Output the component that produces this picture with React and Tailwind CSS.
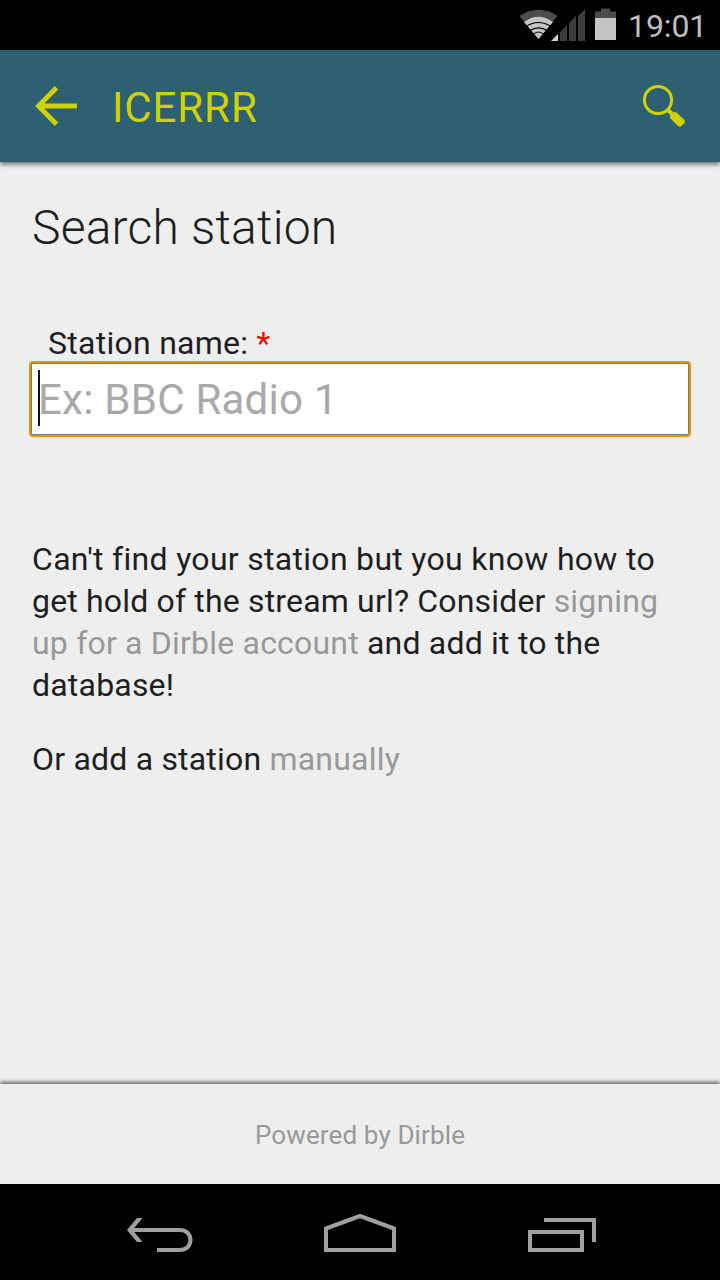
function StatusBar() {
  return (
    <div className="flex h-[50px] shrink-0 items-center justify-end bg-black pr-[14px]">
      <svg className="h-[50px] w-[120px] shrink-0" viewBox="0 0 120 50">
        <path d="M19.500 16 Q38.500 3.500 57.500 16 L38.500 39 Z" fill="#4c4c4c" />
        <path d="M24 22 Q38.500 11.500 53 22 L38.500 39 Z" fill="#c4c4c4" />
        <path d="M26 26.500 Q38.500 18.500 51 26.500" fill="none" stroke="#000" strokeWidth="1.200" />
        <path d="M29.500 30.800 Q38.500 25 47.500 30.800" fill="none" stroke="#000" strokeWidth="1.200" />
        <path d="M33 34.500 Q38.500 29.500 44 34.500" fill="none" stroke="#000" strokeWidth="1.100" />
        <path d="M51 41 L58 34 V41 Z" fill="#d0d0d0" />
        <path d="M60 32 L67 25 V41 H60 Z M69 23 L76 16 V41 H69 Z M78 16 L85 9 V41 H78 Z" fill="#3c3c3c" />
        <path d="M95 18 V11.500 H101 V8.500 H110 V11.500 H116 V18 Z" fill="#4c4c4c" />
        <path d="M95 18 H116 V40 H95 Z" fill="#c4c4c4" />
      </svg>
      <span className="ml-[8px] mt-[2px] w-[78px] whitespace-nowrap text-[32px] leading-[38px] tracking-[-0.1px] text-[#bebebe]">19:01</span>
    </div>
  );
}

function Header() {
  return (
    <header className="relative z-10 flex h-[112px] shrink-0 items-center bg-[#2d6073] pl-[34px] pr-[34px] text-[#cfd100] shadow-[0_2px_5px_rgba(0,0,0,0.6)]">
      <svg className="h-[42px] w-[44px]" viewBox="0 0 44 42" fill="none" stroke="currentColor" strokeWidth="4.800">
        <path d="M43 21 H5 M22.500 2.800 L4.500 21 L22.500 39.200" />
      </svg>
      <h1 className="ml-[34px] mt-[4px] whitespace-nowrap text-[42px] leading-[50px] tracking-[0.9px]">ICERRR</h1>
      <svg className="ml-auto h-[44px] w-[44px]" viewBox="0 0 44 44" fill="none" stroke="currentColor">
        <circle cx="16" cy="16" r="13.600" strokeWidth="3" />
        <path d="M25.500 25.500 L31 31" strokeWidth="4" />
        <path d="M28 32 L32 28 L34.500 28.500 L42.500 36 Q43.500 38 42 39.500 L39.500 42 Q37.500 43.500 35.500 41.500 L28 34 Z" fill="currentColor" stroke="none" />
      </svg>
    </header>
  );
}

function StationField() {
  return (
    <div className="mt-[65px]">
      <label htmlFor="station" className="block whitespace-nowrap pl-[16px] text-[32px] leading-[42px] tracking-[0.27px]">
        Station name: <span className="text-[#ff0000]">*</span>
      </label>
      <div className="relative -ml-[3px] -mr-[3px] mt-[-3px] flex h-[76px] rounded-[4px] border-2 border-[#e59700] bg-[#e59700]">
        <input
          id="station"
          placeholder="Ex: BBC Radio 1"
          className="h-[72px] w-full rounded-[2px] border border-[#7b7b7b] bg-white pl-[6px] text-[42px] tracking-[0.25px] outline-none placeholder:text-[#a9a9a9]"
        />
        <span className="absolute left-[7px] top-[7px] h-[56px] w-[2px] bg-[#111]" />
      </div>
    </div>
  );
}

function NavBar() {
  return (
    <nav className="flex h-24 shrink-0 items-start bg-black pl-[126px] pt-[28px]">
      <svg className="h-[42px] w-[68px]" viewBox="0 0 68 42" fill="none" stroke="#a0a0a0" strokeWidth="4">
        <path d="M31 38 H54 C68 38 68 18 54 18 H4" />
        <path d="M11 6 H16.500 L6.500 18 L16.500 30 H11 L1 18 Z" fill="#a0a0a0" stroke="none" />
      </svg>
      <svg className="ml-[130px] h-[42px] w-[72px]" viewBox="0 0 72 42" fill="none" stroke="#a0a0a0" strokeWidth="4">
        <path d="M2 38 V16.500 L36 4 L70 16.500 V38 Z" />
      </svg>
      <svg className="ml-[132px] h-[42px] w-[68px]" viewBox="0 0 68 42" fill="none" stroke="#a0a0a0" strokeWidth="4">
        <path d="M2 20 H54 V38 H2 Z M16 8 H66 V30" />
      </svg>
    </nav>
  );
}

export default function App() {
  return (
    <div className="flex h-[1280px] w-[720px] flex-col overflow-hidden bg-[#eee] font-['Roboto',sans-serif] text-[#1f1f1f]">
      <StatusBar />
      <Header />
      <main className="flex-1 px-8 pt-[37px]">
        <h2 className="whitespace-nowrap text-[48px] font-light leading-[58px] tracking-[0.2px]">Search station</h2>
        <StationField />
        <p className="mt-[101px] whitespace-nowrap text-[32px] leading-[42px] tracking-[0.2px]">
          <span className="tracking-[0.3px]">Can't find your station but you know how to</span>
          <br />
          <span className="tracking-[0.17px]">
            get hold of the stream url? Consider <a className="text-[#999]">signing</a>
          </span>
          <br />
          <a className="text-[#999]">up for a Dirble account</a> and add it to the
          <br />
          database!
        </p>
        <p className="mt-8 whitespace-nowrap text-[32px] leading-[42px] tracking-[0.2px]">
          Or add a station <a className="text-[#999]">manually</a>
        </p>
      </main>
      <footer className="flex h-[100px] shrink-0 items-center justify-center bg-[#eee] pt-[2px] text-[26px] tracking-[0.13px] text-[#999] shadow-[0_-2px_4px_rgba(0,0,0,0.6)]">
        <span className="whitespace-nowrap">Powered by Dirble</span>
      </footer>
      <NavBar />
    </div>
  );
}
